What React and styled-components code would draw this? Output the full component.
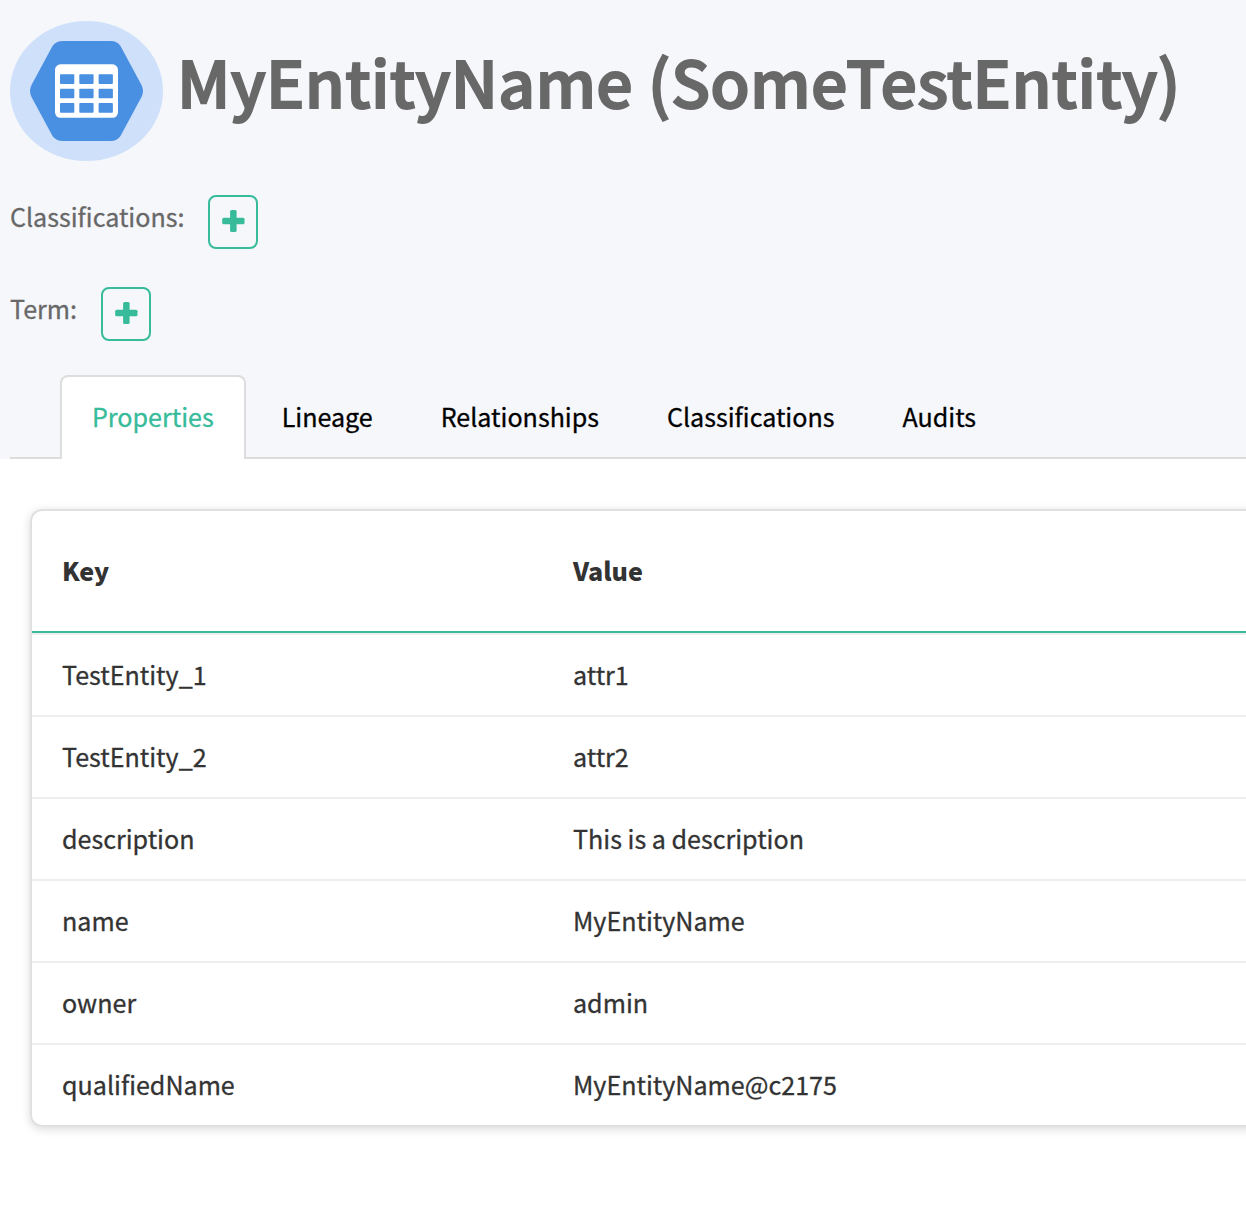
import React from 'react';
import styled, { createGlobalStyle } from 'styled-components';

const Global = createGlobalStyle`
  *{box-sizing:border-box}
  body{margin:0}
`;
const Page = styled.main`
  min-height:100vh;overflow:hidden;background:#fff;color:#333;
  font-family:"Noto Sans CJK SC",sans-serif;font-size:25.08px;
  -webkit-text-stroke:.3px currentColor;
`;
const Header = styled.header`
  height:459px;padding:21px 0 0 10px;background:#f6f7fb;display:flex;flex-direction:column;
`;
const TitleRow = styled.div`display:flex;height:140px;gap:14px;`;
const Title = styled.h1`
  margin:0;font-size:64.3px;letter-spacing:.28px;line-height:118px;font-weight:500;color:#686868;white-space:nowrap;
  -webkit-text-stroke:1.9px currentColor;
`;
const Field = styled.div`
  display:flex;height:54px;margin-top:${p => p.$top}px;color:#686868;
`;
const Label = styled.span`width:${p => p.$width}px;line-height:42px;`;
const AddButton = styled.button`
  width:50px;height:54px;padding:0 0 2px;border:2px solid #37bb9b;border-radius:8px;background:transparent;
  display:flex;align-items:center;justify-content:center;
`;
const Tabs = styled.nav`
  display:flex;height:84px;margin-top:auto;padding-left:50px;border-bottom:2px solid #ddd;gap:3.95px;
`;
const Tab = styled.a`
  height:84px;padding:0 30px;line-height:78px;white-space:nowrap;
  border:2px solid ${p => (p.$active ? '#ddd' : 'transparent')};border-bottom:0;border-radius:8px 8px 0 0;
  background:${p => (p.$active ? '#fff' : 'transparent')};color:${p => (p.$active ? '#37bb9b' : '#000')};
`;
const Card = styled.section`
  margin:50px -20px 0 30px;border:2px solid #e0e0e0;border-radius:12px;box-shadow:0 2px 10px rgba(0,0,0,.15);
`;
const Row = styled.div`
  display:grid;grid-template-columns:511px 1fr;padding-left:30px;height:82px;line-height:78px;
  border-bottom:2px solid #eee;
  &:nth-child(2){height:84px;border-top:2px solid #eee}
  &:last-child{border-bottom:0;height:80px}
`;
const HeadRow = styled(Row)`
  height:122px;line-height:118px;font-weight:900;border-bottom-color:#37bb9b;-webkit-text-stroke:0;
`;
const tabs = ['Properties', 'Lineage', 'Relationships', 'Classifications', 'Audits'];
const rows = [
  ['TestEntity_1', 'attr1'],
  ['TestEntity_2', 'attr2'],
  ['description', 'This is a description'],
  ['name', 'MyEntityName'],
  ['owner', 'admin'],
  ['qualifiedName', 'MyEntityName@c2175'],
];
const cells = [0, 1, 2].flatMap(r => [0, 1, 2].map(c => [c, r]));

const EntityIcon = () => (
  <svg width="153" height="140" viewBox="0 0 153 140">
    <ellipse cx="76.5" cy="70" rx="76.5" ry="70" fill="#cfe0fa" />
    <path d="M53 20H101Q107 20 110.500 25L131.500 64Q134.500 70 131.500 76L110.500 115Q107 120 101 120H53Q46 120 42.500 115L21.500 76Q18.500 70 21.500 64L42.500 25Q46 20 53 20Z" fill="#4a90e2" />
    <rect x="45" y="43.300" width="63" height="53.500" rx="5.500" fill="#fff" />
    {cells.map(([c, r]) => (
      <rect key={`${c}${r}`} x={50 + c * 19.3} y={53.3 + r * 14.4} width="14.3" height="9.6" rx=".8" fill="#4a90e2" />
    ))}
  </svg>
);
const Add = () => (
  <AddButton aria-label="Add">
    <svg width="24" height="24" viewBox="0 0 24 24" fill="#37bb9b">
      <rect x="1.200" y="8.800" width="22.300" height="6.400" rx="1.500" />
      <rect x="9.100" y="1" width="6.500" height="22" rx="1.500" />
    </svg>
  </AddButton>
);
export default function App() {
  return (
    <Page>
      <Global />
      <Header>
        <TitleRow><EntityIcon /><Title>MyEntityName (SomeTestEntity)</Title></TitleRow>
        <Field $top={34}><Label $width={198}>Classifications:</Label><Add /></Field>
        <Field $top={38}><Label $width={91}>Term:</Label><Add /></Field>
        <Tabs>{tabs.map((t, i) => <Tab key={t} $active={i === 0}>{t}</Tab>)}</Tabs>
      </Header>
      <Card>
        <HeadRow><span>Key</span><span>Value</span></HeadRow>
        {rows.map(([k, v]) => <Row key={k}><span>{k}</span><span>{v}</span></Row>)}
      </Card>
    </Page>
  );
}
